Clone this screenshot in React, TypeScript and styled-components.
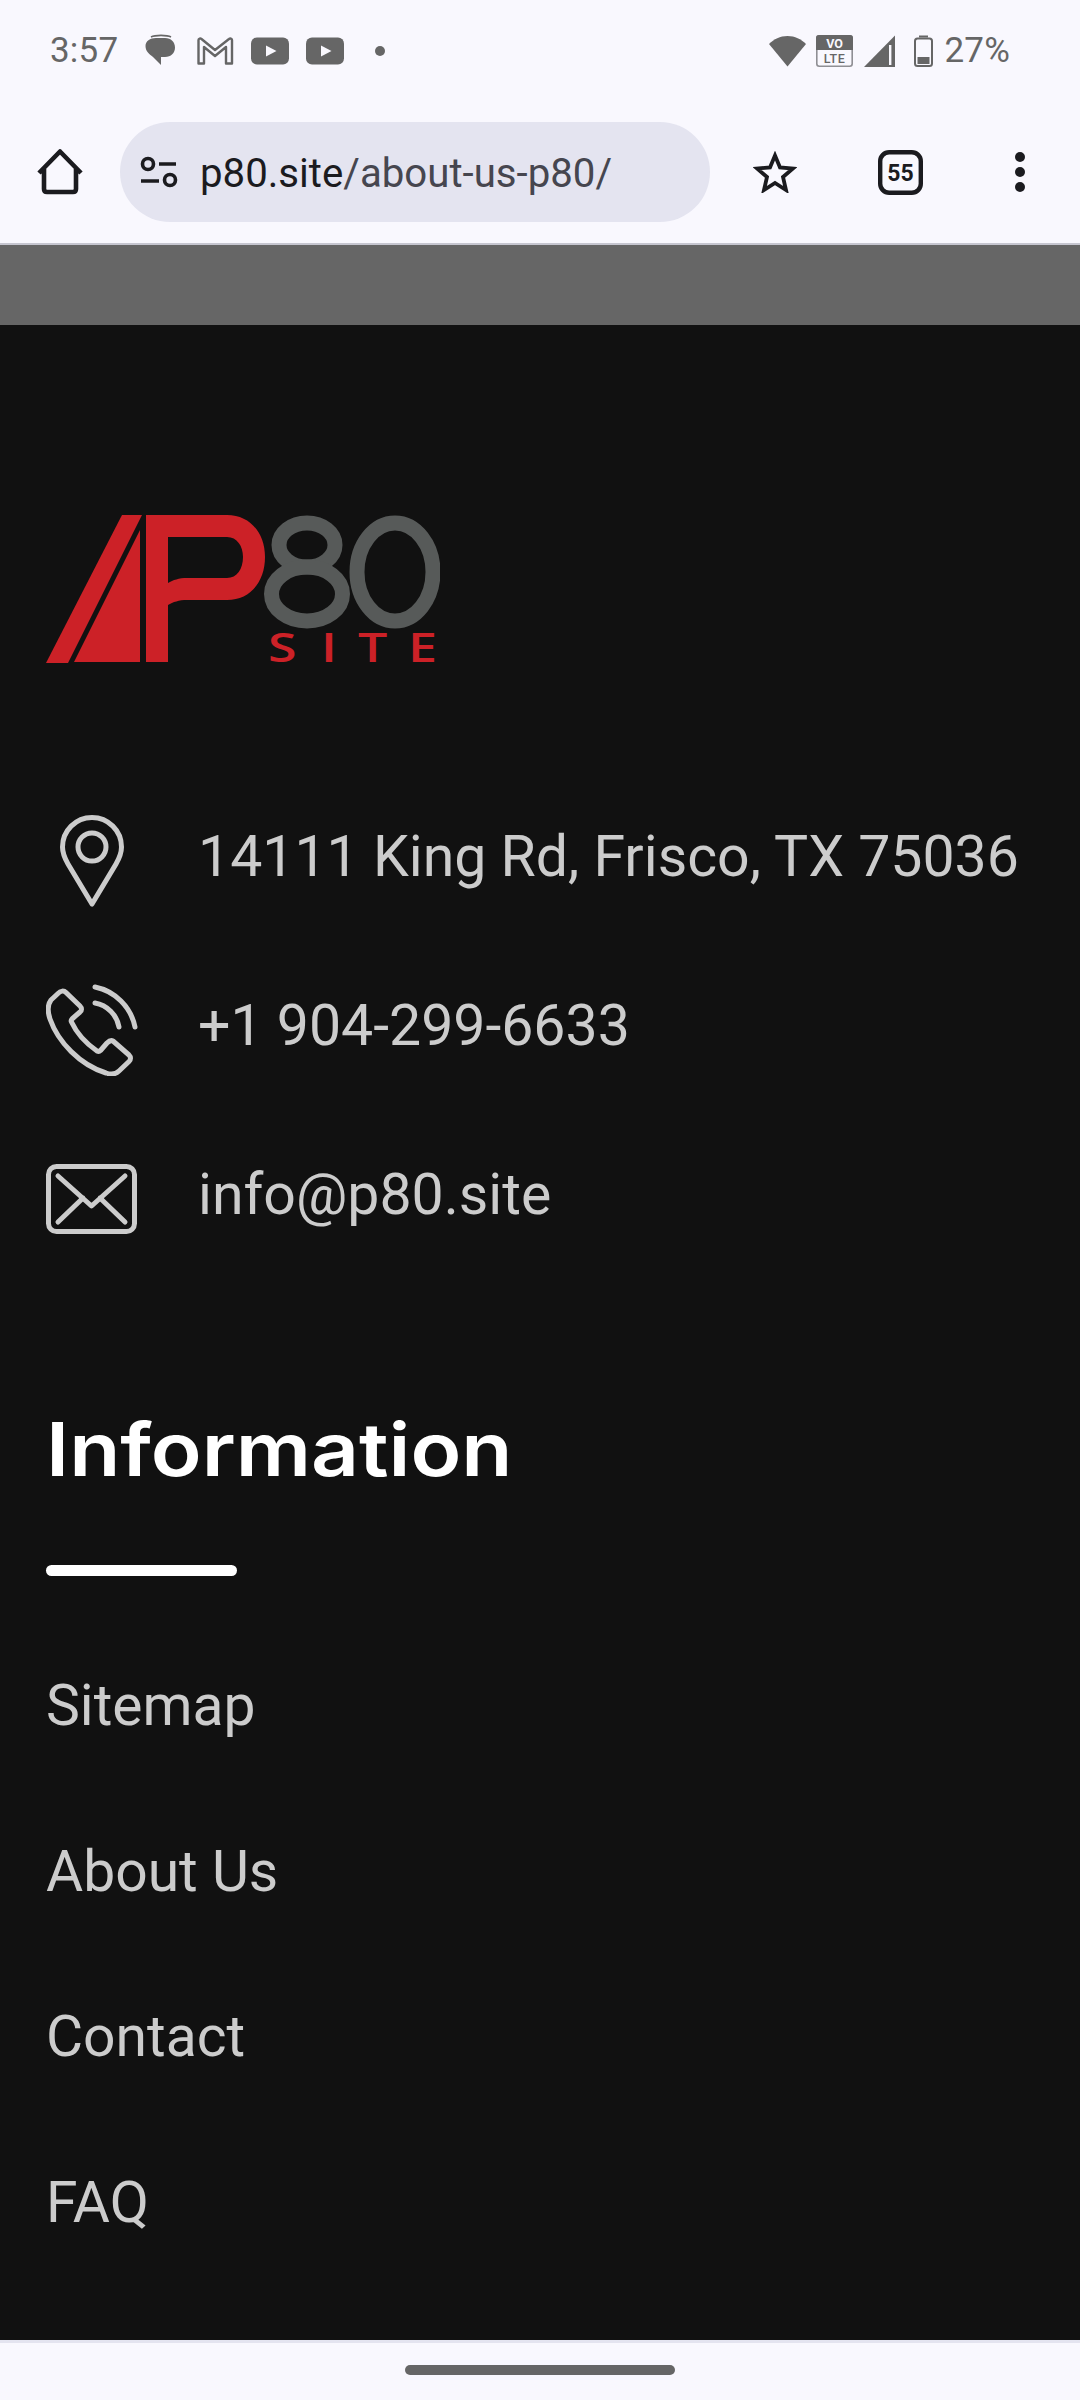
import styled, { createGlobalStyle } from "styled-components";

const GlobalStyle = createGlobalStyle`
  html, body {
    margin: 0;
    padding: 0;
    background: #f9f8fe;
  }
  * {
    box-sizing: border-box;
  }
`;

const Page = styled.div`
  width: 1080px;
  height: 2400px;
  display: flex;
  flex-direction: column;
  overflow: hidden;
  font-family: Roboto, "Liberation Sans", sans-serif;
`;

const StatusBar = styled.div`
  height: 102px;
  flex: none;
  padding: 0 70px 0 50px;
  display: flex;
  align-items: center;
  justify-content: space-between;
  background: #f9f8fe;
  color: #666666;
`;

const StatusGroup = styled.div`
  display: flex;
  align-items: center;
  gap: ${(p: { $gap: number }) => p.$gap}px;
`;

const StatusText = styled.span`
  font-size: 35px;
  line-height: 40px;
  letter-spacing: 0.2px;
`;

const Time = styled(StatusText)`
  margin-right: 10px;
`;

const Toolbar = styled.div`
  height: 143px;
  flex: none;
  padding-top: 20px;
  display: grid;
  grid-template-columns: 120px 590px 130px 120px 120px;
  grid-template-rows: 100px;
  align-items: center;
  justify-items: center;
  background: #f9f8fe;
  border-bottom: 2px solid #c6c6d0;
`;

const UrlPill = styled.div`
  width: 100%;
  height: 100px;
  display: flex;
  align-items: center;
  gap: 22px;
  padding-left: 20px;
  border-radius: 50px;
  background: #e4e4f0;
`;

const UrlText = styled.div`
  padding-top: 4px;
  font-size: 40.2px;
  line-height: 48px;
  color: #46464f;
  white-space: nowrap;
`;

const UrlHost = styled.span`
  color: #1b1b1f;
`;

const DimStrip = styled.div`
  height: 80px;
  flex: none;
  background: #666666;
`;

const Footer = styled.div`
  flex: 1;
  padding: 190px 46px 0;
  display: flex;
  flex-direction: column;
  background: #111111;
`;

const Logo = styled.svg`
  display: block;
  width: 394px;
  height: 160px;
  flex: none;
`;

const ContactList = styled.div`
  margin-top: 140px;
  display: flex;
  flex-direction: column;
  gap: 77px;
`;

const ContactRow = styled.div`
  display: grid;
  grid-template-columns: 92px 1fr;
  column-gap: 60px;
  height: 92px;
  align-items: center;
`;

const ContactIcon = styled.div`
  display: flex;
  justify-content: center;
  align-items: center;
`;

const ContactText = styled.div`
  font-size: 57.2px;
  line-height: 68px;
  color: #cccccc;
  white-space: nowrap;
  padding-bottom: 8px;
`;

// the site uses a wide geometric face, Inter stretched comes closest
const Heading = styled.h2`
  margin: 159px 0 0;
  font-family: Inter, "Open Sans", sans-serif;
  font-weight: 600;
  font-size: 74px;
  line-height: 90px;
  color: #ffffff;
  transform: scaleX(1.13);
  transform-origin: left center;
`;

const HeadingRule = styled.div`
  margin-top: 71px;
  width: 191px;
  height: 11px;
  border-radius: 6px;
  background: #ffffff;
`;

const LinkList = styled.div`
  margin-top: 96px;
  display: flex;
  flex-direction: column;
  gap: 97.5px;
`;

const FooterLink = styled.a`
  display: block;
  font-size: 57px;
  line-height: 68px;
  color: #cccccc;
  text-decoration: none;
`;

const NavBar = styled.div`
  height: 60px;
  flex: none;
  display: flex;
  justify-content: center;
  padding-top: 22px;
  background: #f9f8fe;
  border-top: 3px solid #e4e4f0;
`;

const HomeHandle = styled.div`
  width: 270px;
  height: 10px;
  border-radius: 5px;
  background: #666666;
`;

const INK = "#1b1b1f";
const GREY = "#666666";
const LINE = "#cccccc";
const RED = "#cc2127";

const MessageIcon = () => (
  <svg width="35" height="34" viewBox="0 0 35 34">
    <path
      d="M6 3 C10 0.8 22 0.8 26 3"
      fill="none"
      stroke={GREY}
      strokeWidth="1.6"
    />
    <path
      d="M0.5 12 C0.5 7 5 4 11 4 H20 C26 4 30 8 30 13.5 C30 19 26 23 20 23 H16 V31 L8 23 C4 20 0.5 17 0.5 12 Z"
      fill={GREY}
    />
  </svg>
);

const GmailIcon = () => (
  <svg width="37" height="28" viewBox="0 0 37 28">
    <path
      d="M1.5 26.5 V3 C1.5 1.5 3.5 1 4.5 2 L18 13 L32 2 C33.2 1 35 1.5 35 3 V26.5 H29 V10 L18 19 L7 10 V26.5 Z"
      fill="none"
      stroke={GREY}
      strokeWidth="2.4"
      strokeLinejoin="round"
    />
  </svg>
);

const YoutubeIcon = () => (
  <svg width="38" height="28" viewBox="0 0 38 28">
    <rect x="0" y="0.5" width="38" height="27" rx="6" fill={GREY} />
    <path d="M15 8.5 L25.5 14 L15 19.5 Z" fill="#f9f8fe" />
  </svg>
);

const DotIcon = () => (
  <svg width="38" height="10" viewBox="0 0 38 10">
    <circle cx="19" cy="5" r="5" fill={GREY} />
  </svg>
);

const WifiIcon = () => (
  <svg width="37" height="32" viewBox="0 0 37 32">
    <path
      d="M18.5 31.5 L0 9 C5 4 11 1 18.5 1 C26 1 32 4 37 9 Z"
      fill={GREY}
    />
  </svg>
);

const VolteIcon = () => (
  <svg width="37" height="32" viewBox="0 0 37 32">
    <rect x="0.8" y="0.8" width="35.4" height="30.4" rx="2.5" fill="#f9f8fe" stroke="#8f8f94" strokeWidth="1.6" />
    <path d="M0 3 C0 1 1 0 3 0 H34 C36 0 37 1 37 3 V15 H0 Z" fill={GREY} />
    <text x="18.5" y="12.5" textAnchor="middle" fontFamily="Roboto, sans-serif" fontWeight="700" fontSize="12.5" fill="#f9f8fe">
      VO
    </text>
    <text x="18.5" y="28" textAnchor="middle" fontFamily="Roboto, sans-serif" fontWeight="500" fontSize="12.5" letterSpacing="0.6" fill={GREY}>
      LTE
    </text>
  </svg>
);

const SignalIcon = () => (
  <svg width="34" height="32" viewBox="0 0 34 32">
    <path d="M1 32 L32 0.5 V32 Z" fill={GREY} />
    <rect x="26" y="10" width="2.4" height="20" fill="#f9f8fe" />
  </svg>
);

const BatteryIcon = () => (
  <svg width="27" height="32" viewBox="0 0 27 32">
    <rect x="12" y="0.5" width="9" height="2" fill={GREY} />
    <rect x="8" y="3.5" width="17" height="27.5" rx="2.5" fill="none" stroke={GREY} strokeWidth="2" />
    <rect x="10.5" y="22" width="12" height="7" fill={GREY} />
  </svg>
);

const HomeIcon = () => (
  <svg width="46" height="46" viewBox="0 0 46 46">
    <path
      d="M2 24 L23 2.5 L44 24 M7 20 V40 C7 42 8 43 10 43 H36 C38 43 39 42 39 40 V20"
      fill="none"
      stroke={INK}
      strokeWidth="4.6"
      strokeLinejoin="round"
    />
  </svg>
);

const TuneIcon = () => (
  <svg width="38" height="32" viewBox="0 0 38 32">
    <circle cx="8" cy="8" r="5.5" fill="none" stroke={INK} strokeWidth="3.6" />
    <path d="M19 8 H36 M1 25 H19" stroke={INK} strokeWidth="3.6" />
    <circle cx="30" cy="24" r="5.5" fill="none" stroke={INK} strokeWidth="3.6" />
  </svg>
);

const StarIcon = () => (
  <svg width="44" height="42" viewBox="0 0 44 42">
    <path
      d="M22 4.5 L27 16.5 L40 17.5 L30 26 L33 39 L22 32 L11 39 L14 26 L4 17.5 L17 16.5 Z"
      fill="none"
      stroke={INK}
      strokeWidth="3.8"
    />
  </svg>
);

const TabsIcon = () => (
  <svg width="45" height="45" viewBox="0 0 45 45">
    <rect x="2.2" y="2.2" width="40.6" height="40.6" rx="9" fill="none" stroke={INK} strokeWidth="4.4" />
    <text x="22.5" y="30.5" textAnchor="middle" fontFamily="Roboto, sans-serif" fontWeight="700" fontSize="23" fill={INK}>
      55
    </text>
  </svg>
);

const MenuIcon = () => (
  <svg width="10" height="40" viewBox="0 0 10 40">
    <circle cx="5" cy="5" r="5" fill={INK} />
    <circle cx="5" cy="20" r="5" fill={INK} />
    <circle cx="5" cy="35" r="5" fill={INK} />
  </svg>
);

const PinIcon = () => (
  <svg width="64" height="92" viewBox="0 0 64 92">
    <path
      d="M32 89 L8 49 C4 42 2.5 37 2.5 32 A29.5 29.5 0 0 1 61.5 32 C61.5 37 60 42 56 49 Z"
      fill="none"
      stroke={LINE}
      strokeWidth="5"
      strokeLinejoin="round"
    />
    <circle cx="32" cy="32" r="14" fill="none" stroke={LINE} strokeWidth="5" />
  </svg>
);

const PhoneIcon = () => (
  <svg width="92" height="92" viewBox="0 0 92 92">
    <path
      d="M12 9.5 C14.5 6.5 18 6.5 20 8.5 L34 22 C36 24 36 26.5 34 28 L26 35 C25 36 25 37 25.5 38 C31 50 41 60 51 67 C52.5 67.8 53.5 67.5 54.5 66.5 L61 59 C63 57 65 56 67 57 L83 71 C85 73 85 75.5 83 77.5 L73 87 C70 90 66 91 60 89 C34 81 12 58 4 35 C1 26 2 20 5 16 Z"
      fill="none"
      stroke={LINE}
      strokeWidth="5"
      strokeLinejoin="round"
    />
    <path
      d="M49 3 C69 7 85 23 89 43 M49 19 C61 21 71 31 73 43"
      fill="none"
      stroke={LINE}
      strokeWidth="5"
      strokeLinecap="round"
    />
  </svg>
);

const MailIcon = () => (
  <svg width="92" height="70" viewBox="0 0 92 70">
    <rect x="2.5" y="2.5" width="86" height="65" rx="8" fill="none" stroke={LINE} strokeWidth="5" />
    <path
      d="M12 12 L45.5 42 L79 12 M12 58 L37 34 M79 58 L54 34"
      fill="none"
      stroke={LINE}
      strokeWidth="5"
      strokeLinecap="round"
      strokeLinejoin="round"
    />
  </svg>
);

const P80Logo = () => (
  <Logo viewBox="0 0 394 160">
    <path d="M76 0 H96 L22 148 H0 Z" fill={RED} />
    <path d="M94 15 V147 H28 Z" fill={RED} />
    <path
      fillRule="evenodd"
      d="M100 0 H181 C204 0 219 18 219 42 C219 67 204 85 181 85 H141 C133 85 127 87 122 90 V147 H100 Z M122 22 V68 C127 65 133 63 141 63 H181 C191 63 197 54 197 42 C197 31 191 22 181 22 Z"
      fill={RED}
    />
    <ellipse cx="261" cy="30" rx="28" ry="22" fill="none" stroke="#575a59" strokeWidth="15" />
    <ellipse cx="261" cy="79" rx="35.5" ry="27" fill="none" stroke="#575a59" strokeWidth="15" />
    <ellipse cx="349" cy="57" rx="38" ry="49" fill="none" stroke="#575a59" strokeWidth="15" />
    <text
      transform="translate(0 147) scale(1.3 1)"
      x="170.8 211.5 240 278.5"
      y="0"
      fontFamily="Open Sans, Liberation Sans, sans-serif"
      fontWeight="600"
      fontSize="40"
      fill={RED}
    >
      SITE
    </text>
  </Logo>
);

const contacts = [
  { icon: <PinIcon />, text: "14111 King Rd, Frisco, TX 75036" },
  { icon: <PhoneIcon />, text: "+1 904-299-6633" },
  { icon: <MailIcon />, text: "info@p80.site" },
];

const links = ["Sitemap", "About Us", "Contact", "FAQ"];

const App = () => (
  <Page>
    <GlobalStyle />
    <StatusBar>
      <StatusGroup $gap={17}>
        <Time>3:57</Time>
        <MessageIcon />
        <GmailIcon />
        <YoutubeIcon />
        <YoutubeIcon />
        <DotIcon />
      </StatusGroup>
      <StatusGroup $gap={10}>
        <WifiIcon />
        <VolteIcon />
        <SignalIcon />
        <BatteryIcon />
        <StatusText>27%</StatusText>
      </StatusGroup>
    </StatusBar>
    <Toolbar>
      <HomeIcon />
      <UrlPill>
        <TuneIcon />
        <UrlText>
          <UrlHost>p80.site</UrlHost>/about-us-p80/
        </UrlText>
      </UrlPill>
      <StarIcon />
      <TabsIcon />
      <MenuIcon />
    </Toolbar>
    <DimStrip />
    <Footer>
      <P80Logo />
      <ContactList>
        {contacts.map((contact) => (
          <ContactRow key={contact.text}>
            <ContactIcon>{contact.icon}</ContactIcon>
            <ContactText>{contact.text}</ContactText>
          </ContactRow>
        ))}
      </ContactList>
      <Heading>Information</Heading>
      <HeadingRule />
      <LinkList>
        {links.map((link) => (
          <FooterLink key={link}>{link}</FooterLink>
        ))}
      </LinkList>
    </Footer>
    <NavBar>
      <HomeHandle />
    </NavBar>
  </Page>
);

export default App;
